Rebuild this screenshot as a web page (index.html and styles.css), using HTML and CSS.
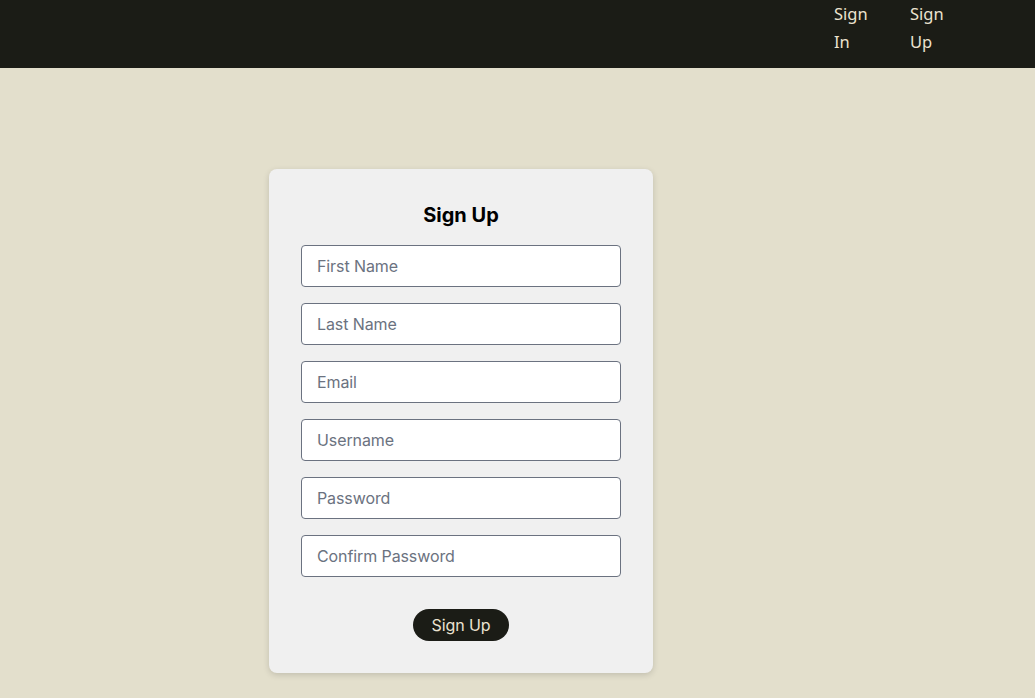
FILE: index.html
```html
<!DOCTYPE html>
<html lang="en">
<head>
<meta charset="utf-8">
<title>Sign Up</title>
<link rel="stylesheet" href="styles.css">
</head>
<body>
<header class="topbar">
  <nav class="nav">
    <a class="nav-link" href="#">Sign In</a>
    <a class="nav-link" href="#">Sign Up</a>
  </nav>
</header>
<main class="main">
  <form class="card">
    <h1 class="card-title">Sign Up</h1>
    <input class="field" type="text" placeholder="First Name">
    <input class="field" type="text" placeholder="Last Name">
    <input class="field" type="email" placeholder="Email">
    <input class="field" type="text" placeholder="Username">
    <input class="field" type="password" placeholder="Password">
    <input class="field" type="password" placeholder="Confirm Password">
    <div class="actions">
      <button class="btn" type="button">Sign Up</button>
    </div>
  </form>
</main>
</body>
</html>
```
FILE: styles.css
```css
* { box-sizing: border-box; }
html, body { margin: 0; padding: 0; }
body {
  background: #e3dfcc;
  font-family: Inter, "Liberation Sans", sans-serif;
  min-height: 698px;
}
.topbar {
  background: #1b1c16;
  height: 68px;
  display: flex;
  justify-content: flex-end;
  padding-right: 89px;
}
.nav {
  display: flex;
  gap: 40px;
}
.nav-link {
  width: 36px;
  color: #ece3d0;
  text-decoration: none;
  font-family: "Noto Sans", Lato, sans-serif;
  font-size: 16.5px;
  line-height: 28px;
}
.main {
  display: flex;
  padding: 101px 0 0 269px;
}
.card {
  width: 384px;
  background: #f0f0f0;
  border-radius: 8px;
  padding: 32px;
  display: flex;
  flex-direction: column;
  gap: 16px;
  box-shadow: 0 2px 6px rgba(0,0,0,0.15);
}
.card-title {
  margin: 0;
  text-align: center;
  font-size: 20px;
  line-height: 28px;
  font-weight: 700;
  color: #000;
}
.field {
  height: 42px;
  width: 320px;
  border: 1px solid #6b7280;
  border-radius: 4px;
  background: #fff;
  padding: 0 15px;
  font-family: Inter, "Liberation Sans", sans-serif;
  font-size: 16px;
  letter-spacing: -0.1px;
  color: #111;
}
.field::placeholder { color: #6b7280; }
.actions {
  display: flex;
  justify-content: center;
  padding-top: 16px;
}
.btn {
  height: 32px;
  padding: 0 19px;
  border: none;
  border-radius: 16px;
  background: #1b1c16;
  color: #ece3d0;
  font-family: Inter, "Liberation Sans", sans-serif;
  font-size: 16px;
  letter-spacing: -0.1px;
}
```
